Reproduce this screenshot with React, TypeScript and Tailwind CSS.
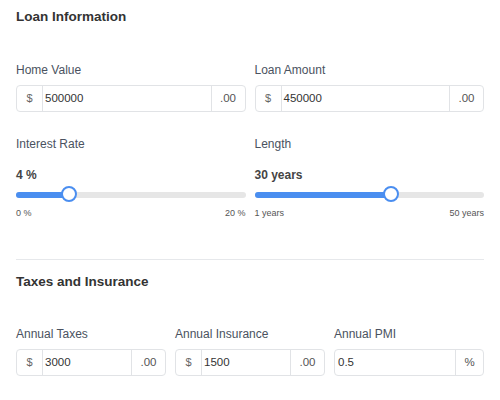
type Field = {
  label: string;
  value: string;
  prefix?: string;
  suffix: string;
  suffixWidth?: string;
};

function MoneyInput({ label, value, prefix, suffix, suffixWidth = "w-[34px]" }: Field) {
  return (
    <div className="flex flex-col">
      <label className="text-[12px] leading-4 text-[#4a5260] mb-[7px]">{label}</label>
      <div className="flex h-[27px] items-stretch rounded-[4px] border border-[#e1e3e6] bg-white text-[11.5px] text-[#333]">
        {prefix && (
          <span className="flex w-[26px] items-center justify-center border-r border-[#e1e3e6] text-[11px] text-[#666]">
            {prefix}
          </span>
        )}
        <span className={`flex flex-1 items-center ${prefix ? "pl-[2px]" : "pl-[3px]"}`}>{value}</span>
        <span
          className={`flex ${suffixWidth} items-center justify-center border-l border-[#e1e3e6] text-[#555]`}
        >
          {suffix}
        </span>
      </div>
    </div>
  );
}

function Slider({
  label,
  display,
  value,
  min,
  max,
  minLabel,
  maxLabel,
}: {
  label: string;
  display: string;
  value: number;
  min: number;
  max: number;
  minLabel: string;
  maxLabel: string;
}) {
  // thumb travels inside the track, 8px inset on each side
  const pct = (value - min) / (max - min);
  return (
    <div className="flex flex-col">
      <label className="text-[12px] leading-4 text-[#4a5260]">{label}</label>
      <div className="mt-[15px] text-[12px] font-bold leading-4 text-[#444]">{display}</div>
      <div className="relative mt-[3px] h-4">
        <div className="absolute left-0 right-0 top-[6px] h-[6px] rounded-full bg-[#e6e6e6]" />
        <div
          className="absolute left-0 top-[6px] h-[6px] rounded-l-full bg-[#4a8ef0]"
          style={{ width: `calc(10px + (100% - 16px) * ${pct})` }}
        />
        <div
          className="absolute top-0 h-4 w-4 rounded-full border-2 border-[#4a8ef0] bg-white"
          style={{ left: `calc(2px + (100% - 16px) * ${pct})` }}
        />
      </div>
      <div className="mt-[5px] flex justify-between text-[9px] leading-3 text-[#555]">
        <span>{minLabel}</span>
        <span>{maxLabel}</span>
      </div>
    </div>
  );
}

export default function App() {
  return (
    <main
      className="h-[400px] w-[500px] bg-white px-4 pt-[7px]"
      style={{ fontFamily: "'Liberation Sans', Arial, sans-serif" }}
    >
      <h2 className="text-[13.5px] font-bold leading-5 text-[#333]">Loan Information</h2>

      <div className="mt-[35px] grid grid-cols-2 gap-x-[9px]">
        <MoneyInput label="Home Value" prefix="$" value="500000" suffix=".00" />
        <MoneyInput label="Loan Amount" prefix="$" value="450000" suffix=".00" />
      </div>

      <div className="mt-[24px] grid grid-cols-2 gap-x-[9px]">
        <Slider
          label="Interest Rate"
          display="4 %"
          value={4}
          min={0}
          max={20}
          minLabel="0 %"
          maxLabel="20 %"
        />
        <Slider
          label="Length"
          display="30 years"
          value={30}
          min={1}
          max={50}
          minLabel="1 years"
          maxLabel="50 years"
        />
      </div>

      <hr className="mt-[40px] border-t border-[#e6e8eb]" />

      <h2 className="mt-[12px] text-[13.5px] font-bold leading-5 text-[#333]">Taxes and Insurance</h2>

      <div className="mt-[34px] grid grid-cols-3 gap-x-[9px]">
        <MoneyInput label="Annual Taxes" prefix="$" value="3000" suffix=".00" />
        <MoneyInput label="Annual Insurance" prefix="$" value="1500" suffix=".00" />
        <MoneyInput label="Annual PMI" value="0.5" suffix="%" suffixWidth="w-[28px]" />
      </div>
    </main>
  );
}
